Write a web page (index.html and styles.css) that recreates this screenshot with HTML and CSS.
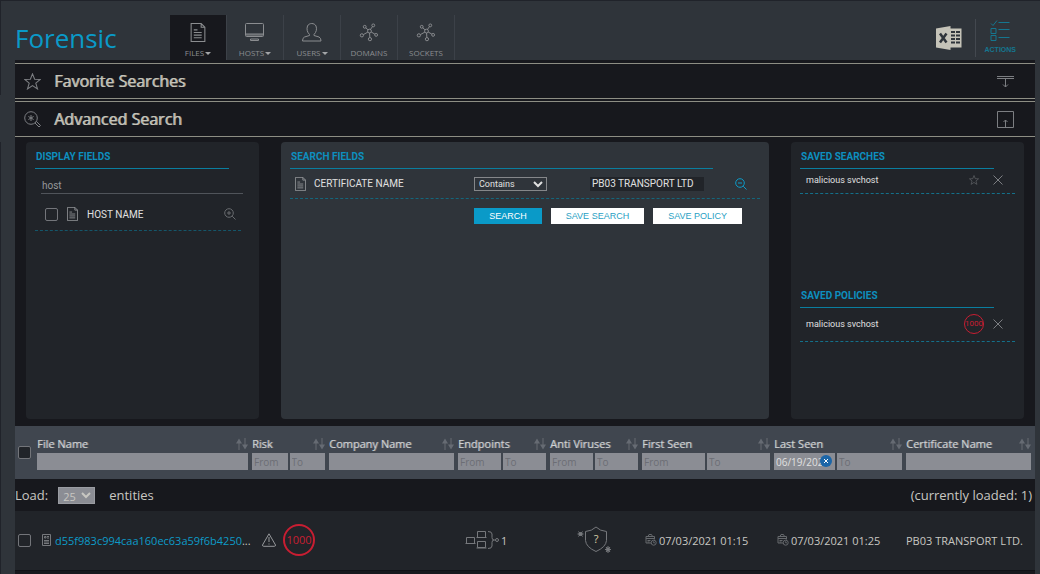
FILE: index.html
```html
<!DOCTYPE html>
<html lang="en">
<head>
<meta charset="utf-8">
<meta name="viewport" content="width=device-width, initial-scale=1">
<title>Forensic</title>
<link rel="stylesheet" href="styles.css">
</head>
<body>

<svg class="defs" aria-hidden="true">
  <symbol id="doc" viewBox="0 0 14 18">
    <path d="M.5.5h9.500l3.500 3.500v13.500H.5zM10 .5v3.500h3.500M3 6.500h3.500M3 9h7.500M3 11.500h7.500M3 14h7.500"/>
  </symbol>
  <symbol id="network" viewBox="0 0 20 20">
    <circle cx="10.500" cy="8.500" r="2"/><circle cx="5.500" cy="4" r="1.500"/><circle cx="14.500" cy="2.500" r="1.500"/>
    <circle cx="2.500" cy="13" r="1.700"/><circle cx="17.500" cy="12.500" r="1.500"/><circle cx="11" cy="17" r="1.700"/>
    <path d="M9 7.200L6.600 5M11.500 6.800l2.200-3M8.800 9.600l-4.700 2.600M12.300 9.500l3.900 2.200M10.600 10.500l.3 4.800"/>
  </symbol>
  <symbol id="star" viewBox="0 0 16 16">
    <path d="M8 .8l2 5.100 5.300.2-4.200 3.400 1.600 5.500L8 11.900 3.300 15l1.600-5.500L.7 6.100 6 5.900z"/>
  </symbol>
  <symbol id="sort" viewBox="0 0 12 12">
    <path d="M3 12V3M9 0v9"/>
    <path class="solid" d="M0 5.500L3 .5l3 5zM6 6.500l3 5 3-5z"/>
  </symbol>
  <symbol id="cross" viewBox="0 0 10 10"><path d="M.5.5l9 9M9.500.5l-9 9"/></symbol>
  <symbol id="calendar" viewBox="0 0 12 12">
    <path d="M1 2.500h8.500v3M1 2.500v6.500h5M1 4.500h8M3 2.500L4 .5h2.500l1 2M2.500 6.500h3M2.500 8h2"/>
    <circle cx="8.700" cy="8.700" r="2.500"/><path d="M8.700 7.300v1.500h1.200"/>
  </symbol>
</svg>

<header class="header">
  <h1 class="brand">Forensic</h1>
  <nav class="tabs">
    <a class="tab active" href="#files"><svg class="icon tab-icon"><use href="#doc"/></svg><span class="tab-label drop">FILES</span></a>
    <a class="tab" href="#hosts">
      <svg class="icon tab-icon" viewBox="0 0 20 19"><rect x=".5" y=".5" width="18" height="13" rx="1"/><path d="M1 11h17M1 12h17M5.500 17.500v-1.500h8v1.500z"/></svg>
      <span class="tab-label drop">HOSTS</span>
    </a>
    <a class="tab" href="#users">
      <svg class="icon tab-icon" viewBox="0 0 20 19"><path d="M7.500 11.500C5 9 4.500 6 5.500 3c1.500-3.300 7-3.300 8.500 0 1 3 .5 6-2 8.500v1l5 1.500q2 .8 2 4H.5q0-3.200 2-4l5-1.500z"/></svg>
      <span class="tab-label drop">USERS</span>
    </a>
    <a class="tab" href="#domains"><svg class="icon tab-icon"><use href="#network"/></svg><span class="tab-label">DOMAINS</span></a>
    <a class="tab" href="#sockets"><svg class="icon tab-icon"><use href="#network"/></svg><span class="tab-label">SOCKETS</span></a>
  </nav>
  <div class="tools">
    <button class="plain" type="button" aria-label="Export to Excel">
      <svg class="excel" viewBox="0 0 26 24">
        <rect class="paper" x="13" y="2.500" width="12.500" height="19"/>
        <path class="cells" d="M15 6h4M20 6h4M15 9.500h4M20 9.500h4M15 13h4M20 13h4M15 16.500h4M20 16.500h4"/>
        <path class="paper" d="M0 2.500L14.500 0v24L0 21.500z"/>
        <path class="cross" d="M4 7.500l6.500 9M10.500 7.500L4 16.500"/>
      </svg>
    </button>
    <button class="plain actions" type="button">
      <svg class="icon" viewBox="0 0 20 21"><path d="M1 3.500l2 2L7 .5M1 8.500h5v5H1zM1 15.500h5v5H1zM8.500 2.500h11M8.500 9.500h11M8.500 17.500h11"/></svg>
      ACTIONS
    </button>
  </div>
</header>

<main class="content">
  <section class="bar">
    <svg class="icon bar-icon"><use href="#star"/></svg>
    <h2 class="bar-title">Favorite Searches</h2>
    <button class="plain" type="button" aria-label="Expand"><svg class="icon bar-icon" viewBox="0 0 17 17"><path d="M0 3.500h17M0 5.500h17M8.500 6v8M6 11.500L8.500 14l2.500-2.500"/></svg></button>
  </section>
  <section class="bar">
    <svg class="icon bar-icon" viewBox="0 0 17 17"><circle cx="7" cy="7" r="6.300"/><path d="M11.500 11.500l1-1 4 4-1.500 1.500-4-4zM7 4v6M4.400 5.500l5.200 3M9.600 5.500l-5.200 3"/></svg>
    <h2 class="bar-title">Advanced Search</h2>
    <button class="plain" type="button" aria-label="Collapse"><svg class="icon bar-icon" viewBox="0 0 17 17"><path d="M.5.5h16v16H.5zM8.500 16V9M6.500 11l2-2 2 2"/></svg></button>
  </section>

  <div class="panels">
    <section class="panel">
      <h3 class="panel-title">DISPLAY FIELDS</h3>
      <input class="filter" type="text" value="host" aria-label="Filter fields">
      <div class="field-row">
        <input class="check" type="checkbox" id="hostname">
        <svg class="icon doc-icon"><use href="#doc"/></svg>
        <label class="grow" for="hostname">HOST NAME</label>
        <button class="plain dim" type="button" aria-label="Add to search"><svg class="icon small-icon" viewBox="0 0 12 12"><circle cx="5" cy="5" r="4.300"/><path d="M8.200 8.200l3.300 3.300M5 3v4M3 5h4"/></svg></button>
      </div>
    </section>

    <section class="panel light">
      <h3 class="panel-title">SEARCH FIELDS</h3>
      <div class="search-row">
        <label class="search-name" for="cert"><svg class="icon doc-icon"><use href="#doc"/></svg>CERTIFICATE NAME</label>
        <div><select class="operator" aria-label="Operator"><option>Contains</option></select></div>
        <div><input class="term" type="text" id="cert" value="PB03 TRANSPORT LTD"></div>
        <button class="plain blue" type="button" aria-label="Remove from search"><svg class="icon small-icon" viewBox="0 0 12 12"><circle cx="5" cy="5" r="4.300"/><path d="M8.200 8.200l3.300 3.300M3 5h4"/></svg></button>
      </div>
      <div class="buttons">
        <button class="btn primary" type="button">SEARCH</button>
        <button class="btn" type="button">SAVE SEARCH</button>
        <button class="btn" type="button">SAVE POLICY</button>
      </div>
    </section>

    <section class="panel">
      <div class="saved">
        <h3 class="panel-title">SAVED SEARCHES</h3>
        <div class="saved-row">
          <span class="grow">malicious svchost</span>
          <button class="plain dim" type="button" aria-label="Favorite"><svg class="icon x-icon"><use href="#star"/></svg></button>
          <button class="plain" type="button" aria-label="Delete"><svg class="icon x-icon"><use href="#cross"/></svg></button>
        </div>
      </div>
      <div>
        <h3 class="panel-title">SAVED POLICIES</h3>
        <div class="saved-row tall">
          <span class="grow">malicious svchost</span>
          <span class="score mini">1000</span>
          <button class="plain" type="button" aria-label="Delete"><svg class="icon x-icon"><use href="#cross"/></svg></button>
        </div>
      </div>
    </section>
  </div>

  <table class="results">
    <colgroup>
      <col class="c-check"><col class="c-file"><col class="c-risk"><col class="c-company"><col class="c-count"><col class="c-count"><col class="c-date"><col class="c-date"><col class="c-company">
    </colgroup>
    <thead>
      <tr>
        <th><input class="check dark" type="checkbox" aria-label="Select all"></th>
        <th><div class="head">File Name<svg class="icon sort"><use href="#sort"/></svg></div><div class="inputs"><input type="text" aria-label="File name"></div></th>
        <th><div class="head">Risk<svg class="icon sort"><use href="#sort"/></svg></div><div class="inputs"><input type="text" placeholder="From" aria-label="Risk from"><input type="text" placeholder="To" aria-label="Risk to"></div></th>
        <th><div class="head">Company Name<svg class="icon sort"><use href="#sort"/></svg></div><div class="inputs"><input type="text" aria-label="Company name"></div></th>
        <th><div class="head">Endpoints<svg class="icon sort"><use href="#sort"/></svg></div><div class="inputs"><input type="text" placeholder="From" aria-label="Endpoints from"><input type="text" placeholder="To" aria-label="Endpoints to"></div></th>
        <th><div class="head">Anti Viruses<svg class="icon sort"><use href="#sort"/></svg></div><div class="inputs"><input type="text" placeholder="From" aria-label="Anti viruses from"><input type="text" placeholder="To" aria-label="Anti viruses to"></div></th>
        <th><div class="head">First Seen<svg class="icon sort"><use href="#sort"/></svg></div><div class="inputs"><input type="text" placeholder="From" aria-label="First seen from"><input type="text" placeholder="To" aria-label="First seen to"></div></th>
        <th><div class="head">Last Seen<svg class="icon sort"><use href="#sort"/></svg></div><div class="inputs"><span class="date"><input class="clearable" type="text" value="06/19/2021" aria-label="Last seen from"><button class="clear" type="button" aria-label="Clear date"><svg class="icon" viewBox="0 0 10 10"><path d="M3 3l4 4M7 3L3 7"/></svg></button></span><input type="text" placeholder="To" aria-label="Last seen to"></div></th>
        <th><div class="head">Certificate Name<svg class="icon sort"><use href="#sort"/></svg></div><div class="inputs"><input type="text" aria-label="Certificate name"></div></th>
      </tr>
    </thead>
    <tbody>
      <tr class="load-row">
        <td colspan="9">
          <div class="load">
            <label for="load">Load:</label>
            <select class="load-select" id="load"><option>25</option></select>
            <span class="grow">entities</span>
            <span>(currently loaded: 1)</span>
          </div>
        </td>
      </tr>
      <tr class="file-row">
        <td><input class="check" type="checkbox" aria-label="Select file"></td>
        <td>
          <div class="cell file">
            <svg class="icon file-icon" viewBox="0 0 9 12"><path d="M.5.5h8v11h-8zM2.500 2.500h1.500v1.500H2.500zM5 2.500h2M5 4h2M2 6.500h5M2 8h5M2 9.500h5"/></svg>
            <span><a href="#file">d55f983c994caa160ec63a59f6b4250</a>...</span>
          </div>
        </td>
        <td>
          <div class="cell risk">
            <svg class="icon warn" viewBox="0 0 14 14"><path d="M7 .8L13.500 12q0 1.300-1 1.300h-11q-1 0-1-1.300zM7 4v5M7 10.500v1"/></svg>
            <span class="score">1000</span>
          </div>
        </td>
        <td></td>
        <td>
          <div class="cell hosts">
            <svg class="icon hosts-icon" viewBox="0 0 34 20"><path d="M1.500 7.500h8v6h-8zM.5 13.500h10M12.500 1.500h8v6h-8zM11.500 7.500h10M12.500 11.500h8v6h-8zM11.500 18h10M23 1.500q4 0 4 2.500v3.500q0 2.500 2 2.500-2 0-2 2.500V16q0 2.500-4 2.500M29 10h1.500"/><circle cx="32" cy="10" r="1.500"/></svg>1
          </div>
        </td>
        <td>
          <div class="cell virus">
            <svg class="icon shield" viewBox="0 0 36 28">
              <path d="M19 1q4 4 10.500 4.500v9Q29 21 19 25.500 9 21 8.500 14.500v-9Q15 5 19 1z"/>
              <path d="M.5 8h6M1.500 5.500l4 5M5.500 5.500l-4 5M28 23.500h6M29 21l4 5M33 21l-4 5M31 20v7"/>
              <circle class="solid" cx="3.500" cy="8" r="2"/><circle class="solid" cx="31" cy="23.500" r="2"/>
              <text x="19" y="17">?</text>
            </svg>
          </div>
        </td>
        <td><div class="cell seen"><svg class="icon cal"><use href="#calendar"/></svg>07/03/2021 01:15</div></td>
        <td><div class="cell seen"><svg class="icon cal"><use href="#calendar"/></svg>07/03/2021 01:25</div></td>
        <td><div class="cell">PB03 TRANSPORT LTD.</div></td>
      </tr>
    </tbody>
  </table>
</main>

</body>
</html>
```

FILE: styles.css
```css
* {
  box-sizing: border-box;
}

body {
  margin: 0;
  min-height: 100vh;
  padding: 0 5px 0 15px;
  display: flex;
  flex-direction: column;
  font-family: "Open Sans", sans-serif;
  font-size: 11px;
  color: #c8c7c2;
  border-top: 1px solid #20232a;
  background: #2f343a;
  background-image: linear-gradient(#20232a 95px, transparent 95px, transparent 142px, #20232a 142px);
  background-size: 1px 100%;
  background-repeat: no-repeat;
}

h1, h2, h3 {
  margin: 0;
}

input, select, button {
  font-family: inherit;
  color: inherit;
}

a {
  color: #0d9bc8;
  text-decoration: none;
}

.defs {
  display: none;
}

.icon {
  display: block;
  fill: none;
  stroke: currentColor;
  flex: none;
}

.solid {
  fill: currentColor;
  stroke: none;
}

.plain {
  display: block;
  padding: 0;
  border: 0;
  background: none;
  color: #7c7e82;
  cursor: pointer;
}

.plain.dim {
  color: #686b6f;
}

.plain.blue {
  color: #0d9bc8;
}

.grow {
  flex: 1;
}

/* header */
.header {
  display: flex;
  height: 59px;
}

.brand {
  width: 155px;
  padding-top: 19px;
  font-size: 26px;
  line-height: 36px;
  font-weight: 400;
  color: #0a9ac8;
}

.tabs {
  display: flex;
  padding-top: 14px;
}

.tab {
  width: 57px;
  padding-top: 8px;
  display: flex;
  flex-direction: column;
  align-items: center;
  gap: 5px;
  border-right: 1px solid #3c4148;
  color: #8b8d90;
}

.tab.active {
  background: #17181d;
}

.tab-icon {
  width: 20px;
  height: 19px;
}

.tab-label {
  font-size: 8px;
  line-height: 12px;
}

.drop::after {
  content: "";
  display: inline-block;
  margin-left: 1px;
  vertical-align: 1px;
  border: 3px solid transparent;
  border-top-color: #a3a5a8;
  border-bottom: 0;
}

.tools {
  margin-left: auto;
  padding: 18px 19px 3px 0;
  display: flex;
  gap: 13px;
}

.excel {
  display: block;
  width: 26px;
  height: 24px;
}

.excel .paper {
  fill: #c5c3b8;
}

.excel .cells {
  stroke: #2f343a;
  stroke-width: 2;
}

.excel .cross {
  fill: none;
  stroke: #2f343a;
  stroke-width: 2.500;
}

.plain.actions {
  padding: 0 0 3px 9px;
  display: flex;
  flex-direction: column;
  align-items: center;
  justify-content: center;
  gap: 5px;
  border-left: 1px solid #43484f;
  font: bold 7px "Liberation Sans", sans-serif;
  color: #15768f;
}

.actions .icon {
  width: 20px;
  height: 21px;
}

/* search bars */
.content {
  flex: 1;
  padding-top: 3px;
  background: #17181d;
}

.bar {
  height: 36px;
  margin-bottom: 2px;
  padding: 0 21px 0 9px;
  display: flex;
  align-items: center;
  gap: 13px;
  border-top: 1px solid #8d8e84;
  border-bottom: 1px solid #8d8e84;
}

.bar-icon {
  width: 17px;
  height: 17px;
  color: #7c7e82;
}

.bar-title {
  flex: 1;
  font-size: 16px;
  line-height: 22px;
  font-weight: 400;
  text-shadow: 1px 0 #a5a39a;
  color: #c6c4ba;
}

/* panels */
.panels {
  display: grid;
  grid-template-columns: 233fr 488fr 233fr;
  gap: 22px;
  padding: 3px 11px 7px;
}

.panel {
  min-height: 277px;
  padding: 7px 9px;
  border-radius: 4px;
  background: #212429;
  font-family: Roboto, sans-serif;
  font-size: 10px;
  color: #e0e0e0;
}

.panel.light {
  background: #2f343a;
}

.panel-title {
  width: 90%;
  padding: 1px 1px 4px;
  border-bottom: 1px solid #0a7e9f;
  font-size: 10px;
  line-height: 14px;
  font-weight: 700;
  color: #0d8fbf;
}

.filter {
  display: block;
  width: 94%;
  height: 17px;
  margin: 8px 0 0 6px;
  padding: 0 1px;
  border: 0;
  border-bottom: 1px solid #50545a;
  background: none;
  font-size: 10px;
  color: #96989b;
}

.field-row {
  width: 96%;
  height: 37px;
  padding: 4px 5px 0 10px;
  display: flex;
  align-items: center;
  gap: 9px;
  border-bottom: 1px dashed #14566a;
}

.check {
  appearance: none;
  display: block;
  width: 13px;
  height: 13px;
  margin: 0;
  border: 1px solid #73757a;
  border-radius: 2px;
}

.check.dark {
  background: #212429;
}

.doc-icon {
  width: 11px;
  height: 14px;
  color: #9fa1a3;
}

.small-icon {
  width: 12px;
  height: 12px;
}

.search-row {
  height: 30px;
  padding-left: 5px;
  display: grid;
  grid-template-columns: 179fr 116fr 145fr 25fr;
  align-items: center;
  border-bottom: 1px dashed #14667c;
}

.search-name {
  display: flex;
  align-items: center;
  gap: 8px;
}

.operator {
  display: block;
  width: 73px;
  height: 14px;
  padding: 0;
  border: 1px solid #85878a;
  background: #2f343a;
  font-size: 9px;
}

.term {
  display: block;
  width: 114px;
  height: 14px;
  padding: 0 2px;
  border: 0;
  background: #212429;
  font-size: 10px;
}

.buttons {
  display: flex;
  justify-content: flex-end;
  gap: 9px;
  padding: 9px 18px 0 0;
}

.btn {
  height: 16px;
  padding: 0 14px;
  border: 1px solid #fff;
  background: #fff;
  font: 9px "Liberation Sans", sans-serif;
  color: #2a9fc4;
  cursor: pointer;
}

.btn.primary {
  border-color: #0a9ac8;
  background: #0a9ac8;
  color: #fff;
}

.saved {
  min-height: 139px;
}

.saved-row {
  height: 25px;
  padding: 0 12px 2px 6px;
  display: flex;
  align-items: center;
  gap: 14px;
  border-bottom: 1px dashed #14708a;
  font-size: 9px;
}

.saved-row.tall {
  height: 34px;
}

.x-icon {
  width: 10px;
  height: 10px;
}

.score {
  width: 32px;
  height: 32px;
  border: 2px solid #c81e32;
  border-radius: 50%;
  font-size: 11px;
  line-height: 28px;
  text-align: center;
  color: #c81e32;
}

.score.mini {
  width: 20px;
  height: 20px;
  margin-right: -5px;
  border-width: 1px;
  font-size: 8px;
  line-height: 18px;
}

/* results */
.results {
  width: 100%;
  table-layout: fixed;
  border-collapse: collapse;
}

.c-check { width: 22px; }
.c-file { width: 215px; }
.c-risk { width: 77px; }
.c-company { width: 129px; }
.c-count { width: 92px; }
.c-date { width: 132px; }

.results th,
.results td {
  padding: 0;
  text-align: left;
}

.results thead tr {
  height: 53px;
  background: #40464f;
}

.results th {
  font-weight: 400;
  color: #cfd1d3;
}

.results .check {
  margin-left: 3px;
}

.head {
  display: flex;
  justify-content: space-between;
  align-items: center;
  padding-right: 4px;
  line-height: 18px;
  text-shadow: 1px 0 #888b90;
}

.sort {
  width: 12px;
  height: 12px;
  color: #666b73;
}

.inputs {
  display: flex;
  gap: 2px;
  padding-right: 4px;
}

.inputs input {
  width: 100%;
  min-width: 0;
  height: 17px;
  padding: 0 2px;
  border: 0;
  background: #8b8d94;
  font-size: 10px;
  color: #e0e0e0;
}

.inputs input::placeholder {
  color: #6c6e74;
}

.inputs > * {
  flex: 1;
}

.date {
  position: relative;
  display: flex;
}

.inputs .clearable {
  padding-right: 13px;
}

.clear {
  position: absolute;
  top: 2px;
  right: 3px;
  width: 12px;
  height: 12px;
  padding: 1px;
  border: 0;
  border-radius: 50%;
  background: #1c66a8;
  color: #fff;
}

.load-row {
  height: 32px;
}

.load {
  display: flex;
  align-items: center;
  padding-right: 3px;
  font-size: 13px;
}

.load-select {
  width: 37px;
  height: 17px;
  margin: 0 14px 0 10px;
  padding: 0;
  border: 1px solid #9a9ca2;
  background: #8b8d94;
  font-size: 11px;
}

.file-row {
  height: 59px;
  background: #212429;
  border-bottom: 1px solid #101116;
}

.cell {
  display: flex;
  align-items: center;
  white-space: nowrap;
}

.file {
  gap: 4px;
  padding-left: 5px;
}

.file-icon {
  width: 9px;
  height: 12px;
  color: #76787c;
}

.risk {
  gap: 7px;
  padding-left: 10px;
}

.warn {
  width: 14px;
  height: 14px;
  color: #96989b;
}

.hosts {
  gap: 2px;
  padding-left: 7px;
}

.hosts-icon {
  width: 34px;
  height: 20px;
  color: #76787c;
}

.virus {
  padding-left: 27px;
}

.shield {
  width: 36px;
  height: 28px;
  color: #76787c;
}

.shield text {
  fill: #d8cfa8;
  stroke: none;
  font-size: 11px;
  text-anchor: middle;
}

.seen {
  gap: 2px;
  padding-left: 3px;
}

.cal {
  width: 12px;
  height: 12px;
  color: #66696d;
}
```
